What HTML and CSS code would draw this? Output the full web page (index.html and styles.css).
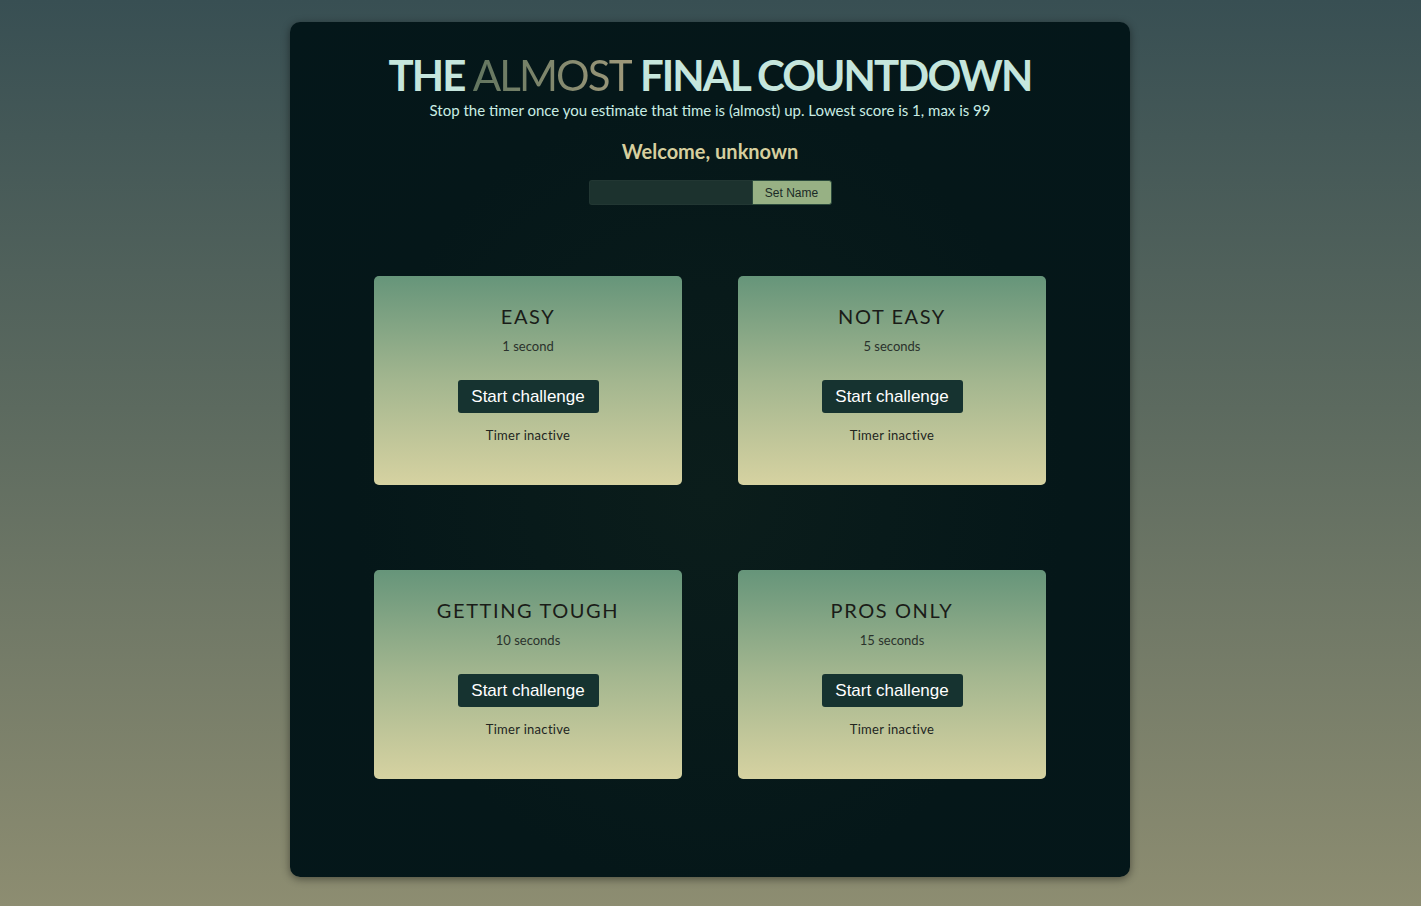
FILE: index.html
```html
<!DOCTYPE html>
<html>
<head>
<meta charset="utf-8">
<link rel="stylesheet" href="styles.css">
</head>
<body>
<main class="app">
  <header class="header">
    <h1 class="title">THE <span class="almost">ALMOST</span> FINAL COUNTDOWN</h1>
    <p class="subtitle">Stop the timer once you estimate that time is (almost) up. Lowest score is 1, max is 99</p>
    <h2 class="welcome">Welcome, unknown</h2>
    <div class="name-form">
      <input class="name-input" type="text">
      <button class="name-btn">Set Name</button>
    </div>
  </header>
  <section class="grid">
    <div class="card">
      <h3 class="card-title">EASY</h3>
      <p class="card-time">1 second</p>
      <button class="start-btn">Start challenge</button>
      <p class="card-status">Timer inactive</p>
    </div>
    <div class="card">
      <h3 class="card-title">NOT EASY</h3>
      <p class="card-time">5 seconds</p>
      <button class="start-btn">Start challenge</button>
      <p class="card-status">Timer inactive</p>
    </div>
    <div class="card">
      <h3 class="card-title">GETTING TOUGH</h3>
      <p class="card-time">10 seconds</p>
      <button class="start-btn">Start challenge</button>
      <p class="card-status">Timer inactive</p>
    </div>
    <div class="card">
      <h3 class="card-title">PROS ONLY</h3>
      <p class="card-time">15 seconds</p>
      <button class="start-btn">Start challenge</button>
      <p class="card-status">Timer inactive</p>
    </div>
  </section>
</main>
</body>
</html>
```
FILE: styles.css
```css
html, body {
  margin: 0;
  padding: 0;
}
body {
  min-height: 906px;
  background: linear-gradient(to bottom, #384f53 0%, #5c6a5f 45%, #8d8d71 100%);
  font-family: "Lato", "Liberation Sans", sans-serif;
  display: flex;
  justify-content: center;
  padding: 22px 1px 0 0;
  box-sizing: border-box;
}
.app {
  width: 840px;
  height: 855px;
  box-sizing: border-box;
  background: radial-gradient(ellipse at 50% 55%, #0b1d1b 0%, #051719 60%, #04171a 100%);
  border-radius: 10px;
  box-shadow: 0 2px 8px rgba(0, 0, 0, 0.45);
  padding: 0 84px;
  display: flex;
  flex-direction: column;
}
.header {
  display: flex;
  flex-direction: column;
  align-items: center;
}
.title {
  margin: 28px 0 0;
  font-family: "Lato", sans-serif;
  font-weight: 700;
  font-size: 42px;
  line-height: 51px;
  color: #c5e6dd;
  letter-spacing: -1.9px;
  white-space: nowrap;
}
.almost {
  background: linear-gradient(to right, #62755f, #a09a7b);
  -webkit-background-clip: text;
  background-clip: text;
  color: transparent;
  font-weight: 400;
}
.subtitle {
  margin: 0;
  font-size: 15px;
  line-height: 18px;
  color: #c9ede4;
}
.welcome {
  margin: 19px 0 0;
  font-weight: 700;
  font-size: 20px;
  line-height: 26px;
  color: #d6cf9e;
}
.name-form {
  display: flex;
  margin-top: 16px;
}
.name-input {
  width: 163px;
  height: 25px;
  box-sizing: border-box;
  background: #1c322e;
  border: 1px solid #223733;
  border-right: none;
  border-radius: 3px 0 0 3px;
  padding: 0 6px;
  outline: none;
}
.name-btn {
  width: 80px;
  height: 25px;
  box-sizing: border-box;
  background: #97b184;
  border: 1px solid #2b4a3c;
  border-radius: 0 3px 3px 0;
  font-family: "Liberation Sans", Arial, sans-serif;
  font-size: 12px;
  color: #1a2a26;
  padding: 0;
}
.grid {
  display: grid;
  grid-template-columns: 308px 308px;
  column-gap: 56px;
  row-gap: 85px;
  margin-top: 71px;
}
.card {
  height: 209px;
  box-sizing: border-box;
  border-radius: 5px;
  background: linear-gradient(to bottom, #66957a 0%, #a3b68f 50%, #d6d2a1 100%);
  display: flex;
  flex-direction: column;
  align-items: center;
  padding-top: 28px;
}
.card-title {
  margin: 0;
  font-weight: 400;
  font-size: 20px;
  line-height: 24px;
  letter-spacing: 1.6px;
  color: #1a1c18;
}
.card-time {
  margin: 10px 0 0;
  font-size: 13px;
  line-height: 16px;
  color: #2a322c;
}
.start-btn {
  margin-top: 26px;
  width: 141px;
  height: 33px;
  background: #163330;
  color: #ffffff;
  border: none;
  border-radius: 3px;
  font-family: "Liberation Sans", Arial, sans-serif;
  font-size: 17px;
  padding: 0;
}
.card-status {
  margin: 14px 0 0;
  font-size: 13px;
  line-height: 16px;
  color: #22261f;
  letter-spacing: 0.3px;
}
```
